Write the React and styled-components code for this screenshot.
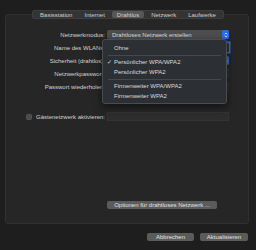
import React from 'react';
import styled, { createGlobalStyle } from 'styled-components';

const GlobalStyle = createGlobalStyle`
  html, body {
    margin: 0;
    padding: 0;
    background: #1e1e1e;
  }
  * { box-sizing: border-box; }
`;

const Window = styled.div`
  width: 256px;
  height: 250px;
  background: #1e1e1e;
  padding-top: 10px;
  font-family: "Liberation Sans", Arial, sans-serif;
  font-size: 6px;
  color: #d4d4d4;
  overflow: hidden;
`;

const TabBar = styled.div`
  position: relative;
  z-index: 1;
  display: flex;
  justify-content: center;
`;

const Tabs = styled.div`
  display: flex;
  height: 9px;
  padding: 0 1px;
  background: #343434;
  border: 1px solid #3d3d3d;
  border-radius: 2px;
`;

const Tab = styled.div`
  display: flex;
  align-items: center;
  padding: 0 5px;
  margin: 0 1px;
  border-radius: 2px;
  color: #cfcfcf;
  background: ${(p) => (p.$active ? '#575757' : 'transparent')};
`;

const Panel = styled.div`
  position: relative;
  margin: -5px 7px 0 5px;
  height: 210px;
  background: #262626;
  border: 1px solid #303030;
  border-radius: 3px;
  padding: 13px 0 14px;
  display: flex;
  flex-direction: column;
`;

const Form = styled.div`
  position: relative;
`;

const Row = styled.div`
  display: grid;
  grid-template-columns: 99px 122px;
  column-gap: 2px;
  align-items: center;
  height: 13px;
  margin-top: ${(p) => p.$gap || 0}px;
`;

const Label = styled.div`
  display: flex;
  justify-content: flex-end;
  align-items: center;
  gap: 4px;
  white-space: nowrap;
`;

const Popup = styled.div`
  display: flex;
  align-items: center;
  justify-content: space-between;
  height: 9px;
  padding-left: 5px;
  background: #4d4d4d;
  border-radius: 2px;
  color: #dedede;
`;

const Stepper = styled.div`
  width: 7px;
  height: 9px;
  border-radius: 2px;
  background: #2a6de8;
  display: flex;
  align-items: center;
  justify-content: center;
`;

const Field = styled.div`
  height: 9px;
  background: #2d2d2d;
  border: 1px solid #333;
  box-shadow: ${(p) => (p.$focus ? '0 0 0 1.5px #2f6fd6' : 'none')};
`;

const Checkbox = styled.div`
  width: 6px;
  height: 6px;
  border-radius: 1.5px;
  background: #4a4a4a;
  border: 1px solid #555;
`;

const Menu = styled.div`
  position: absolute;
  left: 96px;
  top: 11px;
  width: 125px;
  padding: 3px 0 2px;
  background: #2c2f34;
  border: 1px solid #4a4c50;
  border-radius: 3px;
  box-shadow: 0 3px 8px rgba(0, 0, 0, 0.55);
  z-index: 2;
`;

const Item = styled.div`
  position: relative;
  height: 10px;
  line-height: 10px;
  padding-left: 11px;
  color: #dcdcdc;
  white-space: nowrap;
`;

const Check = styled.span`
  position: absolute;
  left: 4px;
  top: 0;
`;

const Separator = styled.div`
  height: 4px;
  display: flex;
  align-items: center;
  padding: 0 5px;
  &::after {
    content: '';
    flex: 1;
    height: 1px;
    background: #45484d;
  }
`;

const OptionsRow = styled.div`
  margin-top: auto;
  padding-left: 101px;
`;

const Button = styled.div`
  display: inline-flex;
  align-items: center;
  justify-content: center;
  height: 8px;
  width: ${(p) => p.$w}px;
  background: #5b5b5b;
  color: #e2e2e2;
  border-radius: 2px;
  white-space: nowrap;
`;

const Footer = styled.div`
  display: flex;
  justify-content: flex-end;
  gap: 6px;
  padding: 9px 8px 0 0;
`;

const StepIcon = () => (
  <svg width="4" height="6" viewBox="0 0 4 6">
    <path d="M0.8 2.3 L2 1 L3.2 2.3 M0.8 3.7 L2 5 L3.2 3.7" fill="none" stroke="#fff" strokeWidth="0.7" />
  </svg>
);

const tabs = ['Basisstation', 'Internet', 'Drahtlos', 'Netzwerk', 'Laufwerke'];

export default function App() {
  return (
    <>
      <GlobalStyle />
      <Window>
        <TabBar>
          <Tabs>
            {tabs.map((t) => (
              <Tab key={t} $active={t === 'Drahtlos'}>{t}</Tab>
            ))}
          </Tabs>
        </TabBar>
        <Panel>
          <Form>
            <Row>
              <Label>Netzwerkmodus:</Label>
              <Popup>
                Drahtloses Netzwerk erstellen
                <Stepper><StepIcon /></Stepper>
              </Popup>
            </Row>
            <Row>
              <Label>Name des WLANs:</Label>
              <Field $focus />
            </Row>
            <Row>
              <Label>Sicherheit (drahtlos):</Label>
              <Popup>
                <span />
                <Stepper><StepIcon /></Stepper>
              </Popup>
            </Row>
            <Row>
              <Label>Netzwerkpasswort:</Label>
              <Field />
            </Row>
            <Row>
              <Label>Passwort wiederholen:</Label>
              <Field />
            </Row>
            <Row $gap={17}>
              <Label>
                <Checkbox />
                Gästenetzwerk aktivieren:
              </Label>
              <Field />
            </Row>

            <Menu>
              <Item>Ohne</Item>
              <Separator />
              <Item><Check>✓</Check>Persönlicher WPA/WPA2</Item>
              <Item>Persönlicher WPA2</Item>
              <Separator />
              <Item>Firmenweiter WPA/WPA2</Item>
              <Item>Firmenweiter WPA2</Item>
            </Menu>
          </Form>
          <OptionsRow>
            <Button $w={110}>Optionen für drahtloses Netzwerk ...</Button>
          </OptionsRow>
        </Panel>
        <Footer>
          <Button $w={47}>Abbrechen</Button>
          <Button $w={48}>Aktualisieren</Button>
        </Footer>
      </Window>
    </>
  );
}
